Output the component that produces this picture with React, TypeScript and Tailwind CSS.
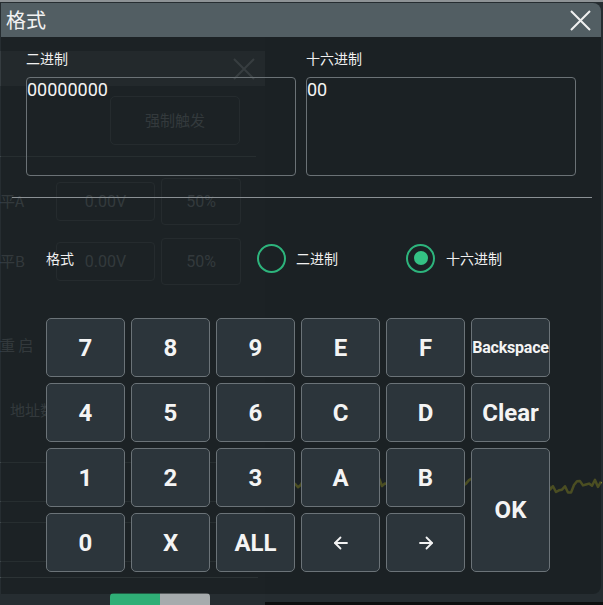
import React from "react";

const CJK = "font-['Noto_Sans_CJK_SC',sans-serif]";
const LAT = "font-['Roboto','Noto_Sans',sans-serif]";

function Key({ label, className = "" }: { label: React.ReactNode; className?: string }) {
  return (
    <div
      className={`flex items-center justify-center rounded-[5px] border border-[#6b7378] bg-[#2c353b] text-[#f4f4f4] font-bold ${LAT} ${className}`}
    >
      {label}
    </div>
  );
}

function Arrow({ dir }: { dir: "left" | "right" }) {
  return (
    <svg width="16" height="14" viewBox="0 0 16 14" fill="none" stroke="#f2f2f2" strokeWidth="1.8" strokeLinecap="round" strokeLinejoin="round">
      {dir === "left" ? (
        <>
          <path d="M14 7H2" />
          <path d="M7.5 1.5L2 7l5.5 5.5" />
        </>
      ) : (
        <>
          <path d="M2 7h12" />
          <path d="M8.5 1.5L14 7l-5.5 5.5" />
        </>
      )}
    </svg>
  );
}

function GhostBox({ w, h, text }: { w: string; h: string; text: string }) {
  return (
    <div className={`${w} ${h} flex items-center justify-center rounded-[4px] border border-[#3a4246] text-[16px] text-[#596165] ${LAT}`}>
      {text}
    </div>
  );
}

const wavePts = (() => {
  const pts: string[] = [];
  let seed = 7;
  for (let x = 0; x <= 338; x += 3) {
    seed = (seed * 9301 + 49297) % 233280;
    const r = seed / 233280;
    const base = 15 + Math.sin(x / 9) * 5 + Math.sin(x / 23) * 3;
    pts.push(`${x},${(base + (r - 0.5) * 10).toFixed(1)}`);
  }
  return pts.join(" ");
})();

export default function App() {
  const row1 = ["7", "8", "9", "E", "F"];
  const row2 = ["4", "5", "6", "C", "D"];
  const row3 = ["1", "2", "3", "A", "B"];
  return (
    <div className="relative w-[603px] h-[605px] overflow-hidden bg-[#101315]">
      {/* background screen */}
      <div className="flex flex-col h-full">
        <div className="h-[3px] bg-[#8d9295]" />
        <div className="flex flex-1">
          {/* ghost side panel */}
          <div className={`w-[265px] flex flex-col bg-[#262d31] ${CJK}`}>
            <div className="h-[49px]" />
            <div className="h-[35px] bg-[#353c40] flex items-center justify-end pr-[9px]">
              <svg width="24" height="22" viewBox="0 0 24 22" stroke="#62696d" strokeWidth="2">
                <path d="M2 1l20 20M22 1L2 21" />
              </svg>
            </div>
            <div className="mt-[10px] ml-[110px] w-[130px] h-[49px] rounded-[5px] border border-[#3a4246] flex items-center justify-center text-[15px] text-[#596165]">
              强制触发
            </div>
            <div className="mt-[11px] h-px w-[256px] bg-[#3f474b]" />
            <div className="mt-[21px] flex items-center h-[47px]">
              <div className="w-[56px] text-[15px] text-[#596165]">平A</div>
              <GhostBox w="w-[99px]" h="h-[39px]" text="0.00V" />
              <div className="w-[6px]" />
              <GhostBox w="w-[80px]" h="h-[47px]" text="50%" />
            </div>
            <div className="mt-[13px] flex items-center h-[47px]">
              <div className="w-[56px] text-[15px] text-[#596165]">平B</div>
              <GhostBox w="w-[99px]" h="h-[39px]" text="0.00V" />
              <div className="w-[6px]" />
              <GhostBox w="w-[80px]" h="h-[47px]" text="50%" />
            </div>
            <div className="mt-[45px] h-[30px] flex items-center gap-[14px] text-[15px] text-[#596165]">
              <span>重 启</span>
              <span className="w-[26px] h-[26px] rounded-full border-2 border-[#2c6b50]" />
            </div>
            <div className="mt-[35px] h-[30px] pl-[10px] flex items-center text-[15px] text-[#596165]">地址数</div>
            <div className="mt-[37px] h-px w-[256px] bg-[#3f474b]" />
            <div className="mt-[38px] h-px w-[256px] bg-[#3f474b]" />
            <div className="mt-[20px] h-px w-[256px] bg-[#3f474b]" />
            <div className="mt-[38px] h-px w-[256px] bg-[#3f474b]" />
            <div className="mt-[15px] h-px w-[258px] bg-[#4a5256]" />
            <div className="mt-[15px] ml-[110px] flex h-[12px] w-[100px] rounded-t-[4px] overflow-hidden">
              <div className="w-[50px] bg-[#2fae76]" />
              <div className="w-[50px] bg-[#a6abad]" />
            </div>
          </div>
          {/* scope screen */}
          <div className="flex-1 flex flex-col bg-[#252c30]">
            <div className="h-[467px]" />
            <svg width="338" height="30" viewBox="0 0 338 30" fill="none">
              <polyline points={wavePts} stroke="#8e8e2c" strokeWidth="2.5" strokeLinejoin="round" />
            </svg>
            <div className="flex-1" />
            <div className="h-[3px] bg-[#0c0e0f]" />
          </div>
        </div>
      </div>

      {/* dialog overlay */}
      <div className="absolute left-[1px] top-[3px] w-[600px] h-[591px] flex flex-col rounded-tr-[8px] rounded-br-[8px] overflow-hidden">
        <div className="h-[34px] shrink-0 bg-[#525e63] flex items-center justify-between pl-[5px] pr-[10px]">
          <span className={`text-[20px] leading-none text-[#f2f2f2] ${CJK}`}>格式</span>
          <svg width="21" height="21" viewBox="0 0 21 21" stroke="#f0f0f0" strokeWidth="2">
            <path d="M1 1l19 19M20 1L1 20" />
          </svg>
        </div>
        <div className="flex-1 bg-[#14191c]/[0.55] flex flex-col">
          {/* text fields */}
          <div className="flex gap-[10px] pl-[25px] pt-[11px]">
            <div className="flex flex-col w-[270px]">
              <div className={`h-[20px] leading-[20px] text-[14px] text-[#f0f0f0] ${CJK}`}>二进制</div>
              <div className="mt-[9px] h-[99px] rounded-[4px] border border-[#6b7276]">
                <div className={`pt-[1px] text-[18px] leading-[22px] text-[#f4f4f4] ${LAT}`}>00000000</div>
              </div>
            </div>
            <div className="flex flex-col w-[270px]">
              <div className={`h-[20px] leading-[20px] text-[14px] text-[#f0f0f0] ${CJK}`}>十六进制</div>
              <div className="mt-[9px] h-[99px] rounded-[4px] border border-[#6b7276]">
                <div className={`pt-[1px] text-[18px] leading-[22px] text-[#f4f4f4] ${LAT}`}>00</div>
              </div>
            </div>
          </div>
          <div className="mt-[21px] ml-[11px] w-[580px] h-px bg-[#8a9094]" />
          {/* format radios */}
          <div className={`mt-[45px] ml-[45px] flex items-center h-[30px] text-[14px] text-[#f0f0f0] ${CJK}`}>
            <div className="w-[211px]">格式</div>
            <div className="w-[149px] flex items-center gap-[10px]">
              <span className="w-[29px] h-[29px] rounded-full border-[2.5px] border-[#2db47c]" />
              <span>二进制</span>
            </div>
            <div className="flex items-center gap-[11px]">
              <span className="w-[29px] h-[29px] rounded-full border-[2.5px] border-[#2db47c] flex items-center justify-center">
                <span className="w-[14px] h-[14px] rounded-full bg-[#34c184]" />
              </span>
              <span>十六进制</span>
            </div>
          </div>
          {/* keypad */}
          <div className="mt-[45px] ml-[45px] grid grid-cols-[repeat(6,79px)] grid-rows-[repeat(4,59px)] gap-[6px]">
            {row1.map((k) => (
              <Key key={k} label={k} className="text-[24px]" />
            ))}
            <Key label="Backspace" className="text-[16px] tracking-[-0.2px]" />
            {row2.map((k) => (
              <Key key={k} label={k} className="text-[24px]" />
            ))}
            <Key label="Clear" className="text-[24px]" />
            {row3.map((k) => (
              <Key key={k} label={k} className="text-[24px]" />
            ))}
            <Key label="OK" className="text-[24px] row-span-2" />
            <Key label="0" className="text-[24px]" />
            <Key label="X" className="text-[24px]" />
            <Key label="ALL" className="text-[24px]" />
            <Key label={<Arrow dir="left" />} />
            <Key label={<Arrow dir="right" />} />
          </div>
        </div>
      </div>
    </div>
  );
}
